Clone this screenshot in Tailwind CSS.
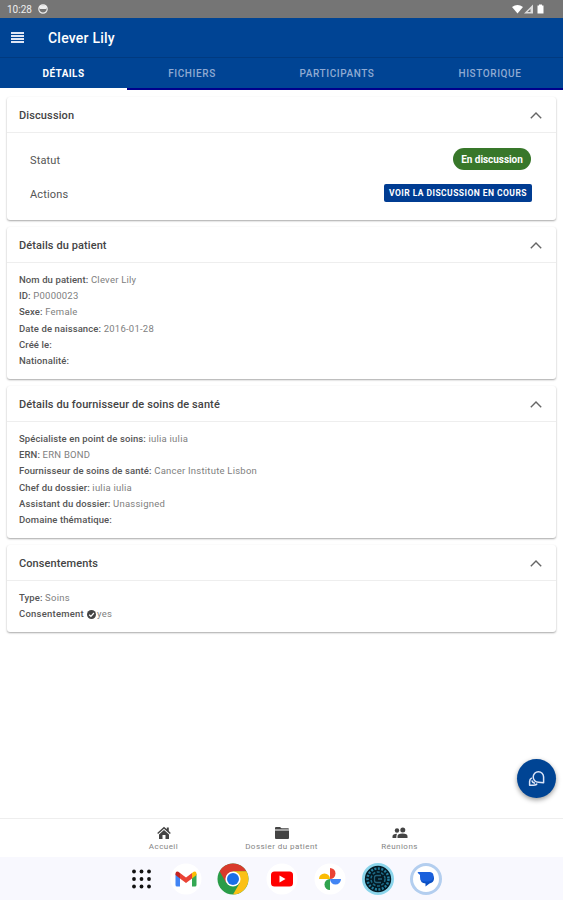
<!DOCTYPE html>
<html lang="fr">

<head>
    <meta charset="UTF-8">
    <meta name="viewport" content="width=device-width, initial-scale=1.0">
    <title>Clever Lily</title>
    <script src="https://cdn.jsdelivr.net/npm/@tailwindcss/browser@4"></script>
</head>

<body class="bg-white font-['Roboto',sans-serif] text-[#444]">
    <div class="relative flex h-[900px] w-[563px] flex-col overflow-hidden">
        <!-- status bar -->
        <div class="flex h-[18px] shrink-0 items-center bg-[#757575] pl-[7px] pr-[18px] text-white">
            <span class="w-[31px] pt-px text-[10px] leading-none text-[#eee]">10:28</span>
            <svg class="h-[10px] w-[10px]" viewBox="0 0 10 10">
                <circle cx="5" cy="5" r="4.2" fill="none" stroke="#eee" stroke-width="1.2" />
                <path d="M1 3.5C2 .6 8 .6 9 3.5L8 5H2Z" fill="#eee" />
            </svg>
            <svg class="ml-auto h-[12px] w-[33px]" viewBox="0 0 33 12" fill="#fff">
                <path d="M0 4Q5.500 0 11 4L5.500 10.500Z" />
                <path d="M21 1.500V10.500H12Z" fill="#ddd" />
                <path d="M18.500 6V9H15.500Z" fill="#757575" />
                <path d="M25.500 2.500H27V1.500H30V2.500H31.500V10.500H25.500Z" />
            </svg>
        </div>

        <!-- title bar -->
        <div class="flex h-10 shrink-0 items-center border-b border-[#003a80] bg-[#004494] pl-[11px]">
            <svg class="h-[11px] w-[13px]" viewBox="0 0 13 11" fill="#dfe6f5">
                <path d="M0 0H13V2H0ZM0 3H13V5H0ZM0 6H13V8H0ZM0 9H13V11H0Z" />
            </svg>
            <h1 class="ml-6 text-[14px] font-medium leading-none tracking-[0.22px] text-white">Clever Lily</h1>
        </div>

        <!-- tabs -->
        <div class="flex h-8 shrink-0 bg-[#004494] text-[10px] font-medium leading-[32px] text-[#8faad2]">
            <div class="w-[127px] border-b-2 border-white text-center font-bold tracking-[0.4px] text-white">DÉTAILS</div>
            <div class="w-[130px] border-b-2 border-[#00008b] text-center tracking-[0.6px]">FICHIERS</div>
            <div class="w-[160px] border-b-2 border-[#00008b] text-center tracking-[0.6px]">PARTICIPANTS</div>
            <div class="w-[146px] border-b-2 border-[#00008b] text-center tracking-[0.6px]">HISTORIQUE</div>
        </div>

        <main class="flex flex-col gap-[7px] px-[7px] pt-[7px]">
            <section class="h-[123px] rounded-[3px] bg-white shadow-[0_1px_2px_rgba(0,0,0,0.35)]">
                <div class="flex h-9 items-center justify-between border-b border-[#eee] pl-3 pr-[14px] pt-[3px]">
                    <h2 class="text-[11px] font-medium tracking-[0.12px]">Discussion</h2>
                    <svg class="mb-[2px] h-[7px] w-[12px]" viewBox="0 0 12 7" fill="none" stroke="#666" stroke-width="1.400"><path d="M.8 6.200L6 1L11.200 6.200" /></svg>
                </div>
                <div class="flex flex-col gap-[11px] pl-[23px] pr-[25px] pt-[15px] text-[11px]">
                    <div class="flex h-[22px] items-center justify-between">
                        <span class="pt-[4px] tracking-[0.15px] text-[#555]">Statut</span>
                        <span class="flex h-[22px] w-[78px] items-center justify-center rounded-full bg-[#38772a] text-[10px] font-bold tracking-[-0.05px] text-white">En discussion</span>
                    </div>
                    <div class="flex h-[24px] items-center justify-between">
                        <span class="pt-[4px] tracking-[0.15px] text-[#555]">Actions</span>
                        <span class="-mr-px flex h-[18px] w-[148px] items-center justify-center rounded-[2px] bg-[#003c92] pt-px text-[8.5px] font-bold tracking-[0.45px] text-white">VOIR LA DISCUSSION EN COURS</span>
                    </div>
                </div>
            </section>

            <section class="h-[152px] rounded-[3px] bg-white shadow-[0_1px_2px_rgba(0,0,0,0.35)]">
                <div class="flex h-9 items-center justify-between border-b border-[#eee] pl-3 pr-[14px] pt-[3px]">
                    <h2 class="text-[11px] font-medium tracking-[0.09px]">Détails du patient</h2>
                    <svg class="mb-[2px] h-[7px] w-[12px]" viewBox="0 0 12 7" fill="none" stroke="#666" stroke-width="1.400"><path d="M.8 6.200L6 1L11.200 6.200" /></svg>
                </div>
                <div class="pl-3 pt-[9px] text-[9.5px] leading-[16.2px] tracking-[0.23px] text-[#808080]">
                    <p><b class="font-medium tracking-[0.1px] text-[#555]">Nom du patient:</b> Clever Lily</p>
                    <p><b class="font-medium tracking-[0.1px] text-[#555]">ID:</b> P0000023</p>
                    <p><b class="font-medium tracking-[0.1px] text-[#555]">Sexe:</b> Female</p>
                    <p><b class="font-medium tracking-[0.1px] text-[#555]">Date de naissance:</b> 2016-01-28</p>
                    <p><b class="font-medium tracking-[0.1px] text-[#555]">Créé le:</b></p>
                    <p><b class="font-medium tracking-[0.1px] text-[#555]">Nationalité:</b></p>
                </div>
            </section>

            <section class="h-[152px] rounded-[3px] bg-white shadow-[0_1px_2px_rgba(0,0,0,0.35)]">
                <div class="flex h-9 items-center justify-between border-b border-[#eee] pl-3 pr-[14px] pt-[3px]">
                    <h2 class="text-[11px] font-medium tracking-[0.1px]">Détails du fournisseur de soins de santé</h2>
                    <svg class="mb-[2px] h-[7px] w-[12px]" viewBox="0 0 12 7" fill="none" stroke="#666" stroke-width="1.400"><path d="M.8 6.200L6 1L11.200 6.200" /></svg>
                </div>
                <div class="pl-3 pt-[9px] text-[9.5px] leading-[16.2px] tracking-[0.23px] text-[#808080]">
                    <p><b class="font-medium tracking-[0.1px] text-[#555]">Spécialiste en point de soins:</b> iulia iulia</p>
                    <p><b class="font-medium tracking-[0.1px] text-[#555]">ERN:</b> ERN BOND</p>
                    <p><b class="font-medium tracking-[0.1px] text-[#555]">Fournisseur de soins de santé:</b> Cancer Institute Lisbon</p>
                    <p><b class="font-medium tracking-[0.1px] text-[#555]">Chef du dossier:</b> iulia iulia</p>
                    <p><b class="font-medium tracking-[0.1px] text-[#555]">Assistant du dossier:</b> Unassigned</p>
                    <p><b class="font-medium tracking-[0.1px] text-[#555]">Domaine thématique:</b></p>
                </div>
            </section>

            <section class="h-[87px] rounded-[3px] bg-white shadow-[0_1px_2px_rgba(0,0,0,0.35)]">
                <div class="flex h-9 items-center justify-between border-b border-[#eee] pl-3 pr-[14px] pt-[3px]">
                    <h2 class="text-[11px] font-medium tracking-[0.1px]">Consentements</h2>
                    <svg class="mb-[2px] h-[7px] w-[12px]" viewBox="0 0 12 7" fill="none" stroke="#666" stroke-width="1.400"><path d="M.8 6.200L6 1L11.200 6.200" /></svg>
                </div>
                <div class="pl-3 pt-[9px] text-[9.5px] leading-[16.2px] tracking-[0.23px] text-[#808080]">
                    <p><b class="font-medium tracking-[0.1px] text-[#555]">Type:</b> Soins</p>
                    <p class="flex items-center"><b class="mr-[3px] font-medium text-[#555]">Consentement</b>
                        <svg class="mr-px h-[9px] w-[9px]" viewBox="0 0 9 9"><circle cx="4.500" cy="4.500" r="4.500" fill="#444" /><path d="M2.200 4.700L3.900 6.300L6.900 3" fill="none" stroke="#fff" stroke-width="1.200" /></svg>yes</p>
                </div>
            </section>
        </main>

        <!-- chat button -->
        <div class="absolute left-[517px] top-[759px] flex h-[39px] w-[39px] items-center justify-center rounded-full bg-[#004494] shadow-[0_2px_5px_rgba(0,0,0,0.4)]">
            <svg class="h-[17px] w-[17px]" viewBox="0 0 17 17" fill="none" stroke="#dce5f8" stroke-width="1.500" stroke-linejoin="round">
                <path d="M15.600 12.700V7A5.200 5.200 0 1 0 10.400 12.200Z" />
                <path d="M3.800 7.800Q1.600 9 1.600 11.500V15.200H5.500Q8.500 15.200 9 13.500M3.800 10.500Q4.500 13 7 13.300" />
            </svg>
        </div>

        <!-- bottom navigation -->
        <nav class="mt-auto flex h-[39px] shrink-0 justify-center border-t border-[#eee] bg-white text-[8px] leading-[10px] text-[#858585]">
            <div class="flex w-[118px] flex-col items-center gap-[2px] pt-[7px]">
                <svg class="h-[14px] w-[14px]" viewBox="0 0 14 14" fill="#444"><path d="M7 .8L9.800 3.300V1.500H11.800V5.100L13.800 7L12.900 8L7 2.800L1.100 8L.2 7Z" /><path d="M7 4L12 8.400V13H8.500V9H5.500V13H2V8.400Z" /></svg>
                <span class="tracking-[0.45px]">Accueil</span>
            </div>
            <div class="flex w-[118px] flex-col items-center gap-[2px] pt-[7px]">
                <svg class="h-[14px] w-[16px]" viewBox="0 0 16 14" fill="#444"><path d="M1 2Q1 1 2 1H6L7.500 2.300H14Q15 2.300 15 3.500H1ZM1 4.500H15V12Q15 13 14 13H2Q1 13 1 12Z" /></svg>
                <span class="tracking-[0.45px]">Dossier du patient</span>
            </div>
            <div class="flex w-[118px] flex-col items-center gap-[2px] pt-[7px]">
                <svg class="h-[14px] w-[16px]" viewBox="0 0 16 14" fill="#444"><circle cx="5" cy="4.500" r="2.200" /><circle cx="10.800" cy="4" r="2.500" /><path d="M.5 12V10.200Q.5 8 5 7.800Q4.300 9 4.300 12ZM5.500 12V10.200Q5.500 7.600 10.500 7.600T15.500 10.200V12Z" /></svg>
                <span class="tracking-[0.45px]">Réunions</span>
            </div>
        </nav>

        <!-- dock -->
        <div class="flex h-[43px] shrink-0 items-center bg-[#f8f8fe] pl-[126px]">
            <svg class="h-[32px] w-[32px]" viewBox="0 0 32 32" fill="#111">
                <circle cx="8" cy="8.500" r="1.900" /><circle cx="15.500" cy="8.500" r="1.900" /><circle cx="23" cy="8.500" r="1.900" />
                <circle cx="8" cy="16" r="1.900" /><circle cx="15.500" cy="16" r="1.900" /><circle cx="23" cy="16" r="1.900" />
                <circle cx="8" cy="23.500" r="1.900" /><circle cx="15.500" cy="23.500" r="1.900" /><circle cx="23" cy="23.500" r="1.900" />
            </svg>
            <svg class="ml-[12px] h-[32px] w-[32px]" viewBox="0 0 32 32">
                <circle cx="16" cy="16" r="15.500" fill="#fff" />
                <path d="M5.500 11L10 14V23.500H7Q5.500 23.500 5.500 22Z" fill="#4285f4" />
                <path d="M26.500 11L22 14V23.500H25Q26.500 23.500 26.500 22Z" fill="#34a853" />
                <path d="M10 10V15.500L16 20L22 15.500V10L16 14.500Z" fill="#ea4335" />
                <path d="M5.500 12V10.500Q6 7 10 10V15.500Z" fill="#c5221f" />
                <path d="M26.500 12V10.500Q26 7 22 10V15.500Z" fill="#fbbc04" />
            </svg>
            <svg class="ml-[15px] h-[32px] w-[32px]" viewBox="0 0 32 32">
                <circle cx="16" cy="16" r="15.500" fill="#2a9c48" />
                <path d="M2.600 8.250A15.500 15.500 0 0 1 29.400 8.250H16L9.300 19.900Z" fill="#d93a2c" />
                <path d="M29.400 8.250A15.500 15.500 0 0 1 16 31.500L22.700 19.900L16 8.250Z" fill="#fbc116" />
                <circle cx="16" cy="16" r="7.600" fill="#fff" /><circle cx="16" cy="16" r="6" fill="#1a6fe8" />
            </svg>
            <svg class="ml-[17px] h-[32px] w-[32px]" viewBox="0 0 32 32">
                <circle cx="16" cy="16" r="15.500" fill="#fff" />
                <rect x="5" y="8.500" width="22" height="15" rx="3.500" fill="#f00" /><path d="M13.500 12.500V19.500L19.500 16Z" fill="#fff" />
            </svg>
            <svg class="ml-[16px] h-[32px] w-[32px]" viewBox="0 0 32 32">
                <circle cx="16" cy="16" r="15.500" fill="#fff" />
                <path d="M16 16V5A5.500 5.500 0 0 1 16 16Z" fill="#ea4335" />
                <path d="M16 16H27A5.500 5.500 0 0 1 16 16Z" fill="#4285f4" />
                <path d="M16 16V27A5.500 5.500 0 0 1 16 16Z" fill="#30a34e" />
                <path d="M16 16H5A5.500 5.500 0 0 1 16 16Z" fill="#fbbc04" />
            </svg>
            <svg class="ml-[16px] h-[32px] w-[32px]" viewBox="0 0 32 32" fill="none">
                <circle cx="16" cy="16" r="16" fill="#8bd5eb" /><circle cx="16" cy="16" r="13.200" fill="#031923" />
                <circle cx="16" cy="16" r="10.500" stroke="#237d9d" stroke-width="2.500" stroke-dasharray="2 1.500" />
                <circle cx="16" cy="16" r="7" stroke="#1c6985" stroke-width="1.500" stroke-dasharray="3 1.500" />
                <path d="M19 12.500H14.500Q12.500 12.500 12.500 14.500V17.500Q12.500 19.500 14.500 19.500H19M16 16H20" stroke="#23627b" stroke-width="1.300" />
            </svg>
            <svg class="ml-[16px] h-[32px] w-[32px]" viewBox="0 0 32 32">
                <circle cx="16" cy="16" r="16" fill="#b3ceef" /><circle cx="16" cy="16" r="13" fill="#fff" />
                <path d="M14 11.500H21Q24 12 24 15.500Q24 19.500 19.500 20.500L15.500 23.500V20.500Q10.500 20 10.500 16Z" fill="#0b50c4" />
                <path d="M8.300 9H20Q23.500 9.500 23.500 13Q23.500 18 18 18.500H14.500Q10 18.500 10 14V12L7.800 10Q7.400 9 8.300 9Z" fill="#1a60dc" />
            </svg>
        </div>
    </div>
</body>

</html>
